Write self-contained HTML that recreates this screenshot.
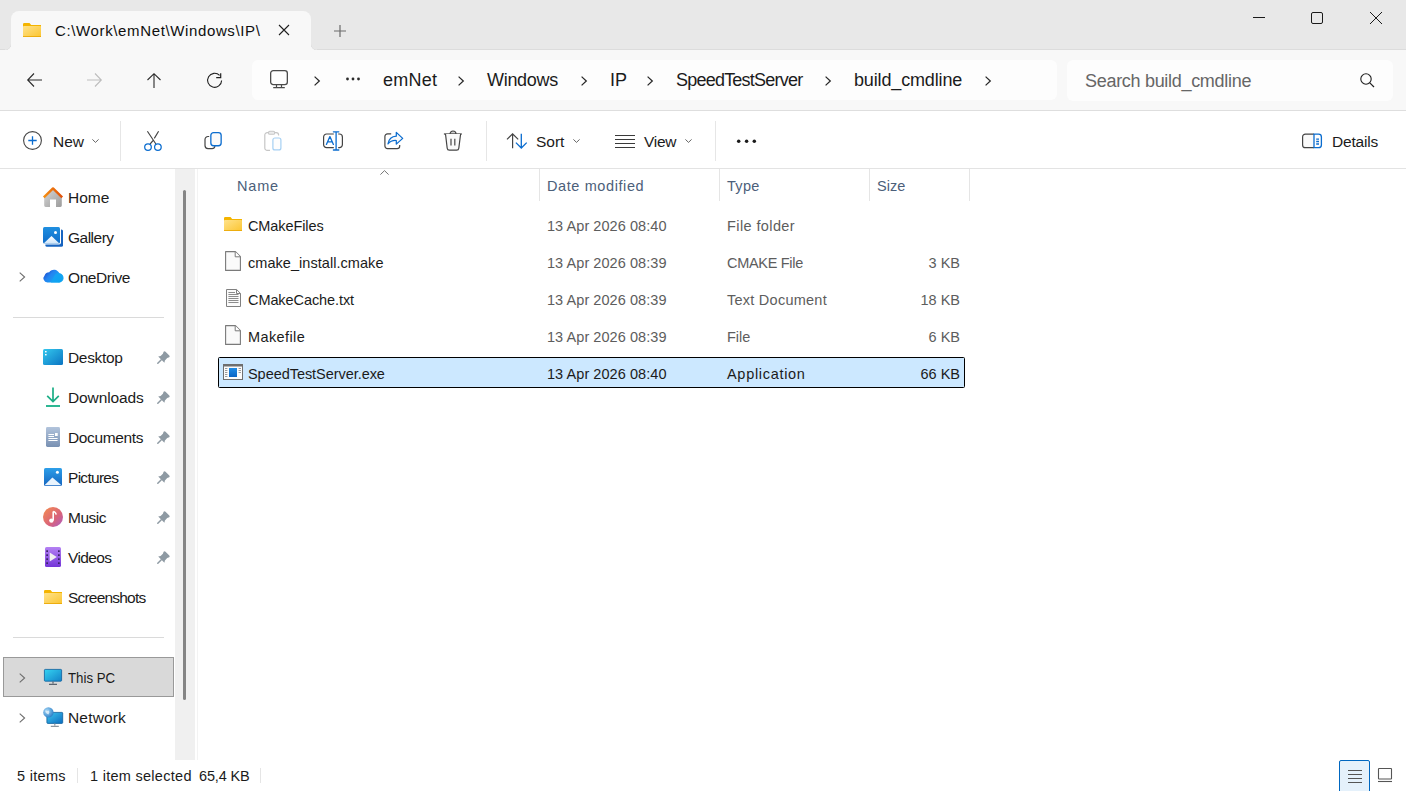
<!DOCTYPE html>
<html><head><meta charset="utf-8">
<style>
*{box-sizing:border-box;margin:0;padding:0}
html,body{width:1406px;height:791px;overflow:hidden;background:#fff}
body{position:relative;font-family:"Liberation Sans",sans-serif;color:#1b1b1b}
.a{position:absolute}
.t{position:absolute;white-space:pre;line-height:20px;font-size:15px}
svg{position:absolute;overflow:visible}
</style></head><body>

<!-- TITLE BAR -->
<div class="a" style="left:0;top:0;width:1406px;height:50px;background:#e8e8e8;border-bottom:1px solid #dcdcdc"></div>
<!-- tab -->
<div class="a" style="left:11px;top:11px;width:300px;height:40px;background:#f8f8f8;border-radius:8px 8px 0 0"></div>
<!-- inverted corners -->
<div class="a" style="left:5px;top:44px;width:6px;height:6px;background:radial-gradient(circle at 0 0,#e8e8e8 5.4px,#dedede 6px,#f8f8f8 6.6px)"></div>
<div class="a" style="left:311px;top:44px;width:6px;height:6px;background:radial-gradient(circle at 100% 0,#e8e8e8 5.4px,#dedede 6px,#f8f8f8 6.6px)"></div>
<!-- address area bg -->
<div class="a" style="left:0;top:50px;width:1406px;height:61px;background:#f8f8f8;border-bottom:1px solid #dedede"></div>

<!-- tab folder icon -->
<svg style="left:23px;top:23px" width="18" height="14" viewBox="0 0 18 14">
<defs><linearGradient id="tfg" x1="0" y1="0" x2="1" y2="1"><stop offset="0" stop-color="#ffe28a"/><stop offset="1" stop-color="#fbc531"/></linearGradient></defs>
<path d="M0 1.2Q0 0 1.2 0H6.5L8.2 2H18V14H0Z" fill="#f4b400"/>
<rect x="0" y="3" width="18" height="11" rx="0.8" fill="url(#tfg)"/>
<rect x="0" y="13.2" width="18" height="0.8" fill="#e9a500"/>
</svg>
<div class="t" style="left:55px;top:21px;font-size:15px;letter-spacing:0.63px;color:#0f0f0f">C:\Work\emNet\Windows\IP\</div>
<svg style="left:279px;top:25px" width="10" height="10" viewBox="0 0 10 10"><path d="M0 0L10 10M10 0L0 10" stroke="#1f1f1f" stroke-width="1.1"/></svg>
<svg style="left:334px;top:25px" width="12" height="12" viewBox="0 0 12 12"><path d="M6 0V12M0 6H12" stroke="#6b6b6b" stroke-width="1.2"/></svg>

<!-- window controls -->
<svg style="left:1253px;top:16px" width="12" height="3" viewBox="0 0 12 3"><path d="M0 1.5H12" stroke="#1a1a1a" stroke-width="1"/></svg>
<svg style="left:1311px;top:12px" width="12" height="12" viewBox="0 0 12 12"><rect x="0.5" y="0.5" width="11" height="11" rx="1.5" fill="none" stroke="#1a1a1a" stroke-width="1"/></svg>
<svg style="left:1370px;top:12px" width="12" height="12" viewBox="0 0 12 12"><path d="M0 0L12 12M12 0L0 12" stroke="#1a1a1a" stroke-width="1"/></svg>

<!-- NAV BUTTONS -->
<svg style="left:27px;top:73px" width="15" height="14" viewBox="0 0 15 14"><path d="M7 0.5L0.7 7L7 13.5M0.7 7H15" fill="none" stroke="#2b2b2b" stroke-width="1.1"/></svg>
<svg style="left:87px;top:73px" width="15" height="14" viewBox="0 0 15 14"><path d="M8 0.5L14.3 7L8 13.5M14.3 7H0" fill="none" stroke="#bdbdbd" stroke-width="1.1"/></svg>
<svg style="left:147px;top:73px" width="14" height="15" viewBox="0 0 14 15"><path d="M0.5 7L7 0.7L13.5 7M7 0.7V15" fill="none" stroke="#2b2b2b" stroke-width="1.1"/></svg>
<svg style="left:207px;top:73px" width="15" height="15" viewBox="0 0 15 15"><path d="M14.6 7.4A7 7 0 1 1 12.6 2.4" fill="none" stroke="#1f1f1f" stroke-width="1.1"/><path d="M13.7 0.2V4.7H9.2" fill="none" stroke="#1f1f1f" stroke-width="1.2"/></svg>

<!-- ADDRESS BOX -->
<div class="a" style="left:252px;top:60px;width:805px;height:40px;background:#fdfdfd;border-radius:6px"></div>
<svg style="left:270px;top:70px" width="18" height="19" viewBox="0 0 18 19"><rect x="0.65" y="0.65" width="16.7" height="13.9" rx="2.6" fill="none" stroke="#4a4a4a" stroke-width="1.3"/><path d="M6.5 14.5V17.4M11.5 14.5V17.4M3.2 17.6H14.8" stroke="#4a4a4a" stroke-width="1.2"/></svg>
<div id="bc"></div>
<svg style="left:314px;top:76px" width="6" height="10" viewBox="0 0 6 10"><path d="M0.6 0.6L5.3 5L0.6 9.4" fill="none" stroke="#262626" stroke-width="1.25"/></svg>
<svg style="left:346px;top:77px" width="14" height="4" viewBox="0 0 14 4"><circle cx="1.5" cy="2" r="1.4" fill="#2b2b2b"/><circle cx="7" cy="2" r="1.4" fill="#2b2b2b"/><circle cx="12.5" cy="2" r="1.4" fill="#2b2b2b"/></svg>
<div class="t" style="left:383px;top:70px;font-size:18px;letter-spacing:0.25px">emNet</div>
<svg style="left:458px;top:76px" width="6" height="10" viewBox="0 0 6 10"><path d="M0.6 0.6L5.3 5L0.6 9.4" fill="none" stroke="#262626" stroke-width="1.25"/></svg>
<div class="t" style="left:487px;top:70px;font-size:18px;letter-spacing:-0.3px">Windows</div>
<svg style="left:581px;top:76px" width="6" height="10" viewBox="0 0 6 10"><path d="M0.6 0.6L5.3 5L0.6 9.4" fill="none" stroke="#262626" stroke-width="1.25"/></svg>
<div class="t" style="left:610px;top:70px;font-size:18px">IP</div>
<svg style="left:647px;top:76px" width="6" height="10" viewBox="0 0 6 10"><path d="M0.6 0.6L5.3 5L0.6 9.4" fill="none" stroke="#262626" stroke-width="1.25"/></svg>
<div class="t" style="left:676px;top:70px;font-size:18px;letter-spacing:-0.78px">SpeedTestServer</div>
<svg style="left:825px;top:76px" width="6" height="10" viewBox="0 0 6 10"><path d="M0.6 0.6L5.3 5L0.6 9.4" fill="none" stroke="#262626" stroke-width="1.25"/></svg>
<div class="t" style="left:854px;top:70px;font-size:18px;letter-spacing:-0.15px">build_cmdline</div>
<svg style="left:985px;top:76px" width="6" height="10" viewBox="0 0 6 10"><path d="M0.6 0.6L5.3 5L0.6 9.4" fill="none" stroke="#262626" stroke-width="1.25"/></svg>

<!-- SEARCH -->
<div class="a" style="left:1067px;top:60px;width:326px;height:41px;background:#fdfdfd;border-radius:6px"></div>
<div class="t" style="left:1085px;top:71px;font-size:18px;letter-spacing:-0.3px;color:#666">Search build_cmdline</div>
<svg style="left:1360px;top:73px" width="15" height="15" viewBox="0 0 15 15"><circle cx="6" cy="6" r="5.2" fill="none" stroke="#1f1f1f" stroke-width="1.1"/><path d="M9.8 9.8L14 14" stroke="#1f1f1f" stroke-width="1.2"/></svg>


<!-- TOOLBAR -->
<div class="a" style="left:0;top:168px;width:1406px;height:1px;background:#e3e3e3"></div>
<svg style="left:23px;top:131px" width="19" height="19" viewBox="0 0 19 19"><circle cx="9.5" cy="9.5" r="8.9" fill="none" stroke="#444" stroke-width="1.1"/><path d="M9.5 5.3V13.7M5.3 9.5H13.7" stroke="#0a6ccf" stroke-width="1.3"/></svg>
<div class="t" style="left:53px;top:132px;font-size:15.5px">New</div>
<svg style="left:92px;top:139px" width="7" height="4" viewBox="0 0 7 4"><path d="M0.4 0.4L3.5 3.4L6.6 0.4" fill="none" stroke="#555" stroke-width="0.9"/></svg>
<div class="a" style="left:120px;top:121px;width:1px;height:40px;background:#e6e6e6"></div>

<!-- cut -->
<svg style="left:144px;top:131px" width="19" height="21" viewBox="0 0 19 21"><path d="M3.4 0.3L11.9 13M14.6 0.3L10.3 7.4M9.2 9.4L6.1 13" stroke="#444" stroke-width="1.15"/><circle cx="4" cy="16.1" r="3.3" fill="none" stroke="#0a6ccf" stroke-width="1.25"/><circle cx="13.9" cy="16.1" r="3.3" fill="none" stroke="#0a6ccf" stroke-width="1.25"/></svg>
<!-- copy -->
<svg style="left:204px;top:131px" width="19" height="20" viewBox="0 0 19 20"><path d="M5.2 5.5H4A3 3 0 0 0 1 8.5V14.6A3 3 0 0 0 4 17.6H8A3 3 0 0 0 11 15.2" fill="none" stroke="#444" stroke-width="1.2"/><rect x="6.85" y="1.65" width="10.3" height="13.1" rx="2.7" fill="#fafafa" stroke="#0a6ccf" stroke-width="1.3"/></svg>
<!-- paste -->
<svg style="left:264px;top:130px" width="19" height="22" viewBox="0 0 19 22"><path d="M4.4 2.6H3.2A2.4 2.4 0 0 0 0.8 5V18A2.4 2.4 0 0 0 3.2 20.4H6M10.6 2.6H12.2A2.4 2.4 0 0 1 14.6 5V5.6" fill="none" stroke="#c6c6c6" stroke-width="1.2"/><rect x="4.5" y="1.3" width="6.2" height="3" rx="1.4" fill="#ececec" stroke="#c6c6c6" stroke-width="1.1"/><rect x="8.9" y="8" width="8" height="11.9" rx="2" fill="#fdfdfd" stroke="#a6d0f3" stroke-width="1.2"/></svg>
<!-- rename -->
<svg style="left:323px;top:131px" width="21" height="21" viewBox="0 0 21 21"><path d="M10.8 3H3.6A3 3 0 0 0 0.6 6V13.6A3 3 0 0 0 3.6 16.6H10.8M15.2 3H16.4A3 3 0 0 1 19.4 6V13.6A3 3 0 0 1 16.4 16.6H15.2" fill="none" stroke="#444" stroke-width="1.2"/><path d="M3.4 13.4L6.9 5.6L10.4 13.4M4.6 10.9H9.2" fill="none" stroke="#0a6ccf" stroke-width="1.3" stroke-linecap="round" stroke-linejoin="round"/><path d="M13.1 0.8V19M10.4 0.8H15.8M10.4 19H15.8" fill="none" stroke="#0a6ccf" stroke-width="1.3" stroke-linecap="round"/></svg>
<!-- share -->
<svg style="left:384px;top:131px" width="20" height="20" viewBox="0 0 20 20"><path d="M7.2 2.9H3.5A2.6 2.6 0 0 0 0.9 5.5V15.1A2.6 2.6 0 0 0 3.5 17.7H13.1A2.6 2.6 0 0 0 15.7 15.1V14.1" fill="none" stroke="#444" stroke-width="1.2"/><path d="M12.3 1.4L18.7 7.35L12.3 13.1V9.5C8.5 9.2 6 10.5 4 12.9C4.8 8 7.5 5.4 12.3 5.2Z" fill="#fafafa" stroke="#0a6ccf" stroke-width="1.25" stroke-linejoin="round"/></svg>
<!-- delete -->
<svg style="left:443px;top:130px" width="20" height="22" viewBox="0 0 20 22"><path d="M7 4A3 3 0 0 1 13 4" fill="#d0d0d0" stroke="#444" stroke-width="1.2"/><path d="M0.9 4H18.8" stroke="#444" stroke-width="1.3"/><path d="M2.5 4L4.2 18.2Q4.4 20.2 6.4 20.2H13.6Q15.6 20.2 15.8 18.2L17.6 4" fill="#fafafa" stroke="#444" stroke-width="1.2"/><path d="M8 8.8V15.6M11.8 8.8V15.6" stroke="#555" stroke-width="1.3"/></svg>
<div class="a" style="left:486px;top:121px;width:1px;height:40px;background:#e6e6e6"></div>

<!-- sort -->
<svg style="left:506px;top:133px" width="22" height="17" viewBox="0 0 22 17"><path d="M6.6 15.2V1M1 6.4L6.6 0.8L12.2 6.4" fill="none" stroke="#444" stroke-width="1.2"/><path d="M15.3 0.8V15M9.9 9.6L15.3 15L20.7 9.6" fill="none" stroke="#0a6ccf" stroke-width="1.3"/></svg>
<div class="t" style="left:536px;top:132px;font-size:15.5px">Sort</div>
<svg style="left:573px;top:139px" width="7" height="4" viewBox="0 0 7 4"><path d="M0.4 0.4L3.5 3.4L6.6 0.4" fill="none" stroke="#555" stroke-width="0.9"/></svg>
<!-- view -->
<svg style="left:615px;top:134px" width="20" height="15" viewBox="0 0 20 15"><path d="M0 1.5H20M0 5.5H20M0 9.5H20M0 13.5H20" stroke="#3a3a3a" stroke-width="1.1"/></svg>
<div class="t" style="left:644px;top:132px;font-size:15.5px;letter-spacing:-0.3px">View</div>
<svg style="left:685px;top:139px" width="7" height="4" viewBox="0 0 7 4"><path d="M0.4 0.4L3.5 3.4L6.6 0.4" fill="none" stroke="#555" stroke-width="0.9"/></svg>
<div class="a" style="left:715px;top:121px;width:1px;height:40px;background:#e6e6e6"></div>
<svg style="left:737px;top:139px" width="20" height="5" viewBox="0 0 20 5"><circle cx="1.7" cy="2.3" r="1.75" fill="#1a1a1a"/><circle cx="9.6" cy="2.3" r="1.75" fill="#1a1a1a"/><circle cx="17.3" cy="2.3" r="1.75" fill="#1a1a1a"/></svg>
<!-- details -->
<svg style="left:1302px;top:133px" width="20" height="16" viewBox="0 0 20 16"><path d="M12 1.1H3.4A2.8 2.8 0 0 0 0.6 3.9V11.9A2.8 2.8 0 0 0 3.4 14.7H12" fill="#fafafa" stroke="#444" stroke-width="1.2"/><path d="M12 1.1H16.6A2.8 2.8 0 0 1 19.4 3.9V11.9A2.8 2.8 0 0 1 16.6 14.7H12Z" fill="#fdfdfd" stroke="#0a6ccf" stroke-width="1.3"/><path d="M14.2 6.1H17M14.2 8.5H17M14.2 11H17" stroke="#0a6ccf" stroke-width="1.3"/></svg>
<div class="t" style="left:1332px;top:132px;font-size:15.5px;letter-spacing:-0.17px">Details</div>

<!-- NAV PANE -->
<div class="a" style="left:175px;top:169px;width:20px;height:591px;background:#f0f0f0"></div>
<div class="a" style="left:183px;top:190px;width:3px;height:510px;background:#858585;border-radius:1.5px"></div>
<div class="a" style="left:197px;top:169px;width:1px;height:591px;background:#f3f3f3"></div>
<div class="a" style="left:13px;top:317px;width:151px;height:1px;background:#dadada"></div>
<div class="a" style="left:13px;top:637px;width:151px;height:1px;background:#dadada"></div>
<div class="a" style="left:3px;top:657px;width:171px;height:40px;background:#d9d9d9;border:1px solid #999"></div>

<!-- home icon -->
<svg style="left:43px;top:187px" width="20" height="20" viewBox="0 0 20 20">
<defs><linearGradient id="hg" x1="0" y1="0" x2="1" y2="1"><stop offset="0" stop-color="#d6d6d6"/><stop offset="1" stop-color="#9c9c9c"/></linearGradient>
<linearGradient id="rg" x1="0" y1="0" x2="1" y2="0"><stop offset="0" stop-color="#f58f12"/><stop offset="1" stop-color="#e0500a"/></linearGradient></defs>
<path d="M1.2 9.6L10 2.4L18.8 9.6V18.6A1.4 1.4 0 0 1 17.4 20H13V12.6H7V20H2.6A1.4 1.4 0 0 1 1.2 18.6Z" fill="url(#hg)"/>
<path d="M0.8 10.4L10 1.4L19.2 10.4" fill="none" stroke="url(#rg)" stroke-width="2.4" stroke-linejoin="round"/>
</svg>
<div class="t" style="left:68px;top:188px;font-size:15.5px;letter-spacing:0px">Home</div>
<!-- gallery -->
<svg style="left:43px;top:227px" width="21" height="21" viewBox="0 0 21 21">
<defs><linearGradient id="gg" x1="0" y1="0" x2="0" y2="1"><stop offset="0" stop-color="#1f8fe0"/><stop offset="1" stop-color="#0f6cc8"/></linearGradient>
<linearGradient id="gm" x1="0" y1="0" x2="0" y2="1"><stop offset="0" stop-color="#ffffff"/><stop offset="1" stop-color="#cfe6fa"/></linearGradient></defs>
<rect x="2.4" y="2.4" width="17.6" height="17.4" rx="1.6" fill="#1764c0"/>
<rect x="-0.8" y="-0.8" width="18.8" height="18.2" rx="2" fill="#fff"/>
<rect x="0" y="0" width="17" height="16.5" rx="1.5" fill="url(#gg)"/>
<path d="M0.6 16.4L8.5 9L16.4 16.4Z" fill="url(#gm)"/>
<circle cx="12.5" cy="5.4" r="1.5" fill="#fff"/>
</svg>
<div class="t" style="left:68px;top:228px;font-size:15.5px;letter-spacing:-0.5px">Gallery</div>
<!-- onedrive -->
<svg style="left:19px;top:272px" width="7" height="10" viewBox="0 0 7 10"><path d="M0.7 0.6L5.6 5L0.7 9.4" fill="none" stroke="#6e6e6e" stroke-width="1.1"/></svg>
<svg style="left:43px;top:269px" width="20" height="14" viewBox="0 0 20 14">
<defs><linearGradient id="og" x1="0" y1="0.2" x2="1" y2="0.8"><stop offset="0" stop-color="#1c48cc"/><stop offset="0.35" stop-color="#2384f0"/><stop offset="1" stop-color="#10b4f4"/></linearGradient>
<linearGradient id="og2" x1="0" y1="0" x2="1" y2="1"><stop offset="0" stop-color="#18a6f6"/><stop offset="1" stop-color="#0aa0ee"/></linearGradient></defs>
<path d="M4.4 13.6A4.3 4.3 0 0 1 1.6 6.4A5 5 0 0 1 6.2 3.2A6 6 0 0 1 16.4 4.2A4.8 4.8 0 0 1 15.4 13.6Z" fill="url(#og)"/>
<path d="M7.8 13.6L11.6 6.6A4.4 4.4 0 0 1 16.4 4.2A4.7 4.7 0 0 1 15.4 13.6Z" fill="url(#og2)" opacity="0.9"/>
</svg>
<div class="t" style="left:68px;top:268px;font-size:15.5px;letter-spacing:-0.43px">OneDrive</div>

<!-- desktop -->
<svg style="left:43px;top:349px" width="20" height="16" viewBox="0 0 20 16">
<defs><linearGradient id="dg" x1="0" y1="0" x2="1" y2="1"><stop offset="0" stop-color="#34c8ee"/><stop offset="1" stop-color="#0b74c2"/></linearGradient></defs>
<rect x="0" y="0" width="20" height="16" rx="1.5" fill="url(#dg)"/>
<rect x="2" y="2" width="1.6" height="1.4" fill="#fff"/><rect x="2" y="5" width="1.6" height="1.4" fill="#fff"/>
</svg>
<div class="t" style="left:68px;top:348px;font-size:15.5px;letter-spacing:-0.33px">Desktop</div>
<svg style="left:157px;top:351px" width="13" height="13" viewBox="0 0 13 13"><path d="M6.6 0.8Q7.5 -0.2 8.5 0.7L12.3 4.5Q13.2 5.5 12.2 6.3L10.2 7.1L7.9 9.4L7.4 11.8L1.2 5.6L3.6 5.1L5.9 2.8Z" fill="#8e9aa3"/><path d="M4.3 8.7L0.8 12.2" stroke="#8e9aa3" stroke-width="1.5" stroke-linecap="round"/></svg>
<!-- downloads -->
<svg style="left:46px;top:387px" width="14" height="20" viewBox="0 0 14 20"><path d="M7 0.5V14.5M1.2 8.8L7 14.6L12.8 8.8" fill="none" stroke="#1cae86" stroke-width="1.7"/><path d="M0 19H14" stroke="#22b48e" stroke-width="1.9"/></svg>
<div class="t" style="left:68px;top:388px;font-size:15.5px;letter-spacing:-0.12px">Downloads</div>
<svg style="left:157px;top:391px" width="13" height="13" viewBox="0 0 13 13"><path d="M6.6 0.8Q7.5 -0.2 8.5 0.7L12.3 4.5Q13.2 5.5 12.2 6.3L10.2 7.1L7.9 9.4L7.4 11.8L1.2 5.6L3.6 5.1L5.9 2.8Z" fill="#8e9aa3"/><path d="M4.3 8.7L0.8 12.2" stroke="#8e9aa3" stroke-width="1.5" stroke-linecap="round"/></svg>
<!-- documents -->
<svg style="left:46px;top:427px" width="14" height="20" viewBox="0 0 14 20">
<defs><linearGradient id="docg" x1="0" y1="0" x2="0" y2="1"><stop offset="0" stop-color="#b2c4dc"/><stop offset="1" stop-color="#7890b2"/></linearGradient></defs>
<rect x="0" y="0" width="14" height="20" rx="1.4" fill="url(#docg)"/>
<path d="M2.4 7.5H8M2.4 9.5H8M2.4 11.5H11.6M2.4 13.5H11.6" stroke="#fff" stroke-width="1"/><rect x="9" y="6" width="2.7" height="3" fill="#fff"/>
</svg>
<div class="t" style="left:68px;top:428px;font-size:15.5px;letter-spacing:-0.37px">Documents</div>
<svg style="left:157px;top:431px" width="13" height="13" viewBox="0 0 13 13"><path d="M6.6 0.8Q7.5 -0.2 8.5 0.7L12.3 4.5Q13.2 5.5 12.2 6.3L10.2 7.1L7.9 9.4L7.4 11.8L1.2 5.6L3.6 5.1L5.9 2.8Z" fill="#8e9aa3"/><path d="M4.3 8.7L0.8 12.2" stroke="#8e9aa3" stroke-width="1.5" stroke-linecap="round"/></svg>
<!-- pictures -->
<svg style="left:44px;top:468px" width="18" height="18" viewBox="0 0 18 18">
<defs><linearGradient id="pg" x1="0" y1="0" x2="0" y2="1"><stop offset="0" stop-color="#2d9fe9"/><stop offset="1" stop-color="#1565c0"/></linearGradient></defs>
<rect x="0" y="0" width="18" height="18" rx="1.6" fill="url(#pg)"/>
<path d="M0.5 17.2L8.4 9.6L17.5 17.2Z" fill="#eaf4fd"/>
<circle cx="13.4" cy="4.2" r="1.5" fill="#fff"/>
</svg>
<div class="t" style="left:68px;top:468px;font-size:15.5px;letter-spacing:-0.71px">Pictures</div>
<svg style="left:157px;top:471px" width="13" height="13" viewBox="0 0 13 13"><path d="M6.6 0.8Q7.5 -0.2 8.5 0.7L12.3 4.5Q13.2 5.5 12.2 6.3L10.2 7.1L7.9 9.4L7.4 11.8L1.2 5.6L3.6 5.1L5.9 2.8Z" fill="#8e9aa3"/><path d="M4.3 8.7L0.8 12.2" stroke="#8e9aa3" stroke-width="1.5" stroke-linecap="round"/></svg>
<!-- music -->
<svg style="left:43px;top:507px" width="20" height="20" viewBox="0 0 20 20">
<defs><linearGradient id="mg" x1="0" y1="0" x2="1" y2="1"><stop offset="0" stop-color="#f58e4f"/><stop offset="0.6" stop-color="#d9637a"/><stop offset="1" stop-color="#a85cc9"/></linearGradient></defs>
<circle cx="10" cy="10" r="10" fill="url(#mg)"/>
<path d="M10.2 4.4V13.4" stroke="#fff" stroke-width="1.6"/><path d="M10.2 4.4Q13 5.2 13.2 7.6" fill="none" stroke="#fff" stroke-width="1.4"/><circle cx="8.4" cy="13.6" r="2.2" fill="#fff"/>
</svg>
<div class="t" style="left:68px;top:508px;font-size:15.5px;letter-spacing:-0.5px">Music</div>
<svg style="left:157px;top:511px" width="13" height="13" viewBox="0 0 13 13"><path d="M6.6 0.8Q7.5 -0.2 8.5 0.7L12.3 4.5Q13.2 5.5 12.2 6.3L10.2 7.1L7.9 9.4L7.4 11.8L1.2 5.6L3.6 5.1L5.9 2.8Z" fill="#8e9aa3"/><path d="M4.3 8.7L0.8 12.2" stroke="#8e9aa3" stroke-width="1.5" stroke-linecap="round"/></svg>
<!-- videos -->
<svg style="left:45px;top:547px" width="16" height="20" viewBox="0 0 16 20">
<defs><linearGradient id="vg" x1="0" y1="0" x2="0" y2="1"><stop offset="0" stop-color="#b481f3"/><stop offset="1" stop-color="#7436d8"/></linearGradient></defs>
<rect x="0" y="0" width="16" height="20" rx="1.6" fill="url(#vg)"/>
<path d="M4.7 5.6L11.8 10L4.7 14.4Z" fill="#f0f0f0"/>
<g fill="#3a2466"><rect x="1.3" y="3.3" width="1.7" height="1.7"/><rect x="1.3" y="7.3" width="1.7" height="1.7"/><rect x="1.3" y="11.3" width="1.7" height="1.7"/><rect x="1.3" y="15.3" width="1.7" height="1.7"/><rect x="13" y="3.3" width="1.7" height="1.7"/><rect x="13" y="7.3" width="1.7" height="1.7"/><rect x="13" y="11.3" width="1.7" height="1.7"/><rect x="13" y="15.3" width="1.7" height="1.7"/></g>
</svg>
<div class="t" style="left:68px;top:548px;font-size:15.5px;letter-spacing:-0.6px">Videos</div>
<svg style="left:157px;top:551px" width="13" height="13" viewBox="0 0 13 13"><path d="M6.6 0.8Q7.5 -0.2 8.5 0.7L12.3 4.5Q13.2 5.5 12.2 6.3L10.2 7.1L7.9 9.4L7.4 11.8L1.2 5.6L3.6 5.1L5.9 2.8Z" fill="#8e9aa3"/><path d="M4.3 8.7L0.8 12.2" stroke="#8e9aa3" stroke-width="1.5" stroke-linecap="round"/></svg>
<!-- screenshots folder -->
<svg style="left:44px;top:590px" width="18" height="14" viewBox="0 0 18 14">
<defs><linearGradient id="fg" x1="0" y1="0" x2="1" y2="1"><stop offset="0" stop-color="#ffe28a"/><stop offset="1" stop-color="#fbc531"/></linearGradient></defs>
<path d="M0 1.2Q0 0 1.2 0H6.5L8.2 2H18V14H0Z" fill="#f4b400"/>
<rect x="0" y="3" width="18" height="11" rx="0.8" fill="url(#fg)"/>
<rect x="0" y="13.2" width="18" height="0.8" fill="#e9a500"/>
</svg>
<div class="t" style="left:68px;top:588px;font-size:15.5px;letter-spacing:-0.8px">Screenshots</div>

<!-- this pc -->
<svg style="left:19px;top:673px" width="7" height="10" viewBox="0 0 7 10"><path d="M0.7 0.6L5.6 5L0.7 9.4" fill="none" stroke="#6e6e6e" stroke-width="1.1"/></svg>
<svg style="left:44px;top:669px" width="18" height="16" viewBox="0 0 18 16">
<defs><linearGradient id="tg" x1="0" y1="0" x2="1" y2="1"><stop offset="0" stop-color="#35d4f2"/><stop offset="1" stop-color="#1282c8"/></linearGradient></defs>
<rect x="0.4" y="0.4" width="17.2" height="11.8" rx="0.8" fill="url(#tg)" stroke="#0c5d9c" stroke-width="0.8"/>
<path d="M9 12.4V14.6M5 15.3H13" stroke="#5a6470" stroke-width="1.2"/>
</svg>
<div class="t" style="left:68px;top:668px;font-size:15.5px;transform:scaleX(0.855);transform-origin:0 0">This PC</div>
<!-- network -->
<svg style="left:19px;top:713px" width="7" height="10" viewBox="0 0 7 10"><path d="M0.7 0.6L5.6 5L0.7 9.4" fill="none" stroke="#6e6e6e" stroke-width="1.1"/></svg>
<svg style="left:43px;top:707px" width="21" height="20" viewBox="0 0 21 20">
<defs><linearGradient id="ng" x1="0" y1="0" x2="1" y2="1"><stop offset="0" stop-color="#3fc7ee"/><stop offset="1" stop-color="#0b6cc0"/></linearGradient>
<radialGradient id="gl" cx="0.35" cy="0.35" r="0.7"><stop offset="0" stop-color="#a9d8f6"/><stop offset="1" stop-color="#2a7fc8"/></radialGradient></defs>
<rect x="3.9" y="5.4" width="15.8" height="11" rx="0.8" fill="url(#ng)" stroke="#0c5d9c" stroke-width="0.8"/>
<path d="M11.8 16.4V18.6M7.8 19.3H15.8" stroke="#8a949e" stroke-width="1.2"/>
<circle cx="5.4" cy="5.4" r="5.2" fill="url(#gl)"/>
<path d="M2.4 3.2Q4.4 4.4 6 3.6Q7 5.6 5.4 7.4Q3.4 7 2.4 5" fill="#e8f4fb" opacity="0.8"/>
</svg>
<div class="t" style="left:68px;top:708px;font-size:15.5px;letter-spacing:0.17px">Network</div>

<!-- LIST -->
<div class="t" style="left:237px;top:176px;font-size:14.5px;letter-spacing:0.8px;color:#4c607a">Name</div>
<svg style="left:380px;top:170px" width="9" height="5" viewBox="0 0 9 5"><path d="M0.4 4.6L4.5 0.6L8.6 4.6" fill="none" stroke="#666" stroke-width="0.9"/></svg>
<div class="a" style="left:539px;top:169px;width:1px;height:32px;background:#e5e5e5"></div>
<div class="t" style="left:547px;top:176px;font-size:14.5px;letter-spacing:0.6px;color:#4c607a">Date modified</div>
<div class="a" style="left:719px;top:169px;width:1px;height:32px;background:#e5e5e5"></div>
<div class="t" style="left:727px;top:176px;font-size:14.5px;letter-spacing:0.3px;color:#4c607a">Type</div>
<div class="a" style="left:869px;top:169px;width:1px;height:32px;background:#e5e5e5"></div>
<div class="t" style="left:877px;top:176px;font-size:14.5px;color:#4c607a">Size</div>
<div class="a" style="left:969px;top:169px;width:1px;height:32px;background:#e5e5e5"></div>

<!-- row selection -->
<div class="a" style="left:218px;top:357px;width:747px;height:31px;background:#cce8ff;border:1px solid #000;border-radius:1.5px"></div>

<!-- folder -->
<svg style="left:224px;top:217px" width="18" height="14" viewBox="0 0 18 14">
<defs><linearGradient id="fg2" x1="0" y1="0" x2="1" y2="1"><stop offset="0" stop-color="#ffe28a"/><stop offset="1" stop-color="#fbc531"/></linearGradient></defs>
<path d="M0 1.2Q0 0 1.2 0H6.5L8.2 2H18V14H0Z" fill="#f4b400"/>
<rect x="0" y="3" width="18" height="11" rx="0.8" fill="url(#fg2)"/>
<rect x="0" y="13.2" width="18" height="0.8" fill="#e9a500"/>
</svg>
<svg style="left:225px;top:251px" width="16" height="20" viewBox="0 0 16 20"><path d="M0.6 0.6H10.4L15.4 5.6V19.4H0.6Z" fill="#fafafa" stroke="#7a7a7a" stroke-width="1.1" stroke-linejoin="round"/><path d="M10.2 0.8V5.8H15.2" fill="#fff" stroke="#7a7a7a" stroke-width="1"/></svg><svg style="left:225px;top:325px" width="16" height="20" viewBox="0 0 16 20"><path d="M0.6 0.6H10.4L15.4 5.6V19.4H0.6Z" fill="#fafafa" stroke="#7a7a7a" stroke-width="1.1" stroke-linejoin="round"/><path d="M10.2 0.8V5.8H15.2" fill="#fff" stroke="#7a7a7a" stroke-width="1"/></svg>
<svg style="left:226px;top:289px" width="15" height="18" viewBox="0 0 15 18"><path d="M0.5 0.5H10.6L14.5 4.4V17.5H0.5Z" fill="#fafafa" stroke="#808080" stroke-width="1" stroke-linejoin="round"/><path d="M10.5 0.6V4.5H14.4" fill="none" stroke="#808080" stroke-width="1"/><path d="M2.4 3.5H9M2.4 5.5H12.5M2.4 7.5H12.5M2.4 9.5H12.5M2.4 11.5H12.5M2.4 13.5H12.5" stroke="#8c8c8c" stroke-width="1"/></svg>
<svg style="left:223px;top:364px" width="20" height="16" viewBox="0 0 20 16">
<defs><linearGradient id="exg" x1="0" y1="0" x2="0" y2="1"><stop offset="0" stop-color="#1e8ce6"/><stop offset="1" stop-color="#0a64c4"/></linearGradient></defs>
<rect x="0.5" y="0.5" width="19" height="15" fill="#fbfbfb" stroke="#6f6f6f" stroke-width="1"/>
<rect x="0.5" y="0.5" width="19" height="2" fill="#6f6f6f"/>
<rect x="6" y="4" width="8" height="9" fill="url(#exg)"/>
<path d="M2 4.5H4.4M2 6.5H4.4M2 8.5H4.4M2 10.5H4.4M2 12.5H4.4M15.6 4.5H18M15.6 6.5H18M15.6 8.5H18" stroke="#9a9a9a" stroke-width="1"/>
</svg>

<div class="t" style="left:248px;top:216px;font-size:14.5px;letter-spacing:-0.1px">CMakeFiles</div>
<div class="t" style="left:248px;top:253px;font-size:14.5px;letter-spacing:0.05px">cmake_install.cmake</div>
<div class="t" style="left:248px;top:290px;font-size:14.5px;letter-spacing:-0.08px">CMakeCache.txt</div>
<div class="t" style="left:248px;top:327px;font-size:14.5px;letter-spacing:0.4px">Makefile</div>
<div class="t" style="left:248px;top:364px;font-size:14.5px;letter-spacing:-0.05px">SpeedTestServer.exe</div>

<div class="t" style="left:547px;top:216px;font-size:14.5px;letter-spacing:0.06px;color:#5d5d5d">13 Apr 2026 08:40</div>
<div class="t" style="left:547px;top:253px;font-size:14.5px;letter-spacing:0.06px;color:#5d5d5d">13 Apr 2026 08:39</div>
<div class="t" style="left:547px;top:290px;font-size:14.5px;letter-spacing:0.06px;color:#5d5d5d">13 Apr 2026 08:39</div>
<div class="t" style="left:547px;top:327px;font-size:14.5px;letter-spacing:0.06px;color:#5d5d5d">13 Apr 2026 08:39</div>
<div class="t" style="left:547px;top:364px;font-size:14.5px;letter-spacing:0.06px;color:#1b1b1b">13 Apr 2026 08:40</div>

<div class="t" style="left:727px;top:216px;font-size:14.5px;letter-spacing:0.4px;color:#5d5d5d">File folder</div>
<div class="t" style="left:727px;top:253px;font-size:14.5px;letter-spacing:-0.3px;color:#5d5d5d">CMAKE File</div>
<div class="t" style="left:727px;top:290px;font-size:14.5px;letter-spacing:0.25px;color:#5d5d5d">Text Document</div>
<div class="t" style="left:727px;top:327px;font-size:14.5px;color:#5d5d5d">File</div>
<div class="t" style="left:727px;top:364px;font-size:14.5px;letter-spacing:0.7px;color:#1b1b1b">Application</div>

<div class="t" style="left:860px;width:100px;text-align:right;top:253px;font-size:14.5px;color:#5d5d5d">3 KB</div>
<div class="t" style="left:860px;width:100px;text-align:right;top:290px;font-size:14.5px;color:#5d5d5d">18 KB</div>
<div class="t" style="left:860px;width:100px;text-align:right;top:327px;font-size:14.5px;color:#5d5d5d">6 KB</div>
<div class="t" style="left:860px;width:100px;text-align:right;top:364px;font-size:14.5px;color:#1b1b1b">66 KB</div>

<!-- STATUS BAR -->
<div class="t" style="left:17px;top:766px;font-size:14.5px;letter-spacing:0.3px">5 items</div>
<div class="a" style="left:77px;top:768px;width:1px;height:15px;background:#e5e5e5"></div>
<div class="t" style="left:90px;top:766px;font-size:14.5px;letter-spacing:0.28px">1 item selected</div>
<div class="t" style="left:199px;top:766px;font-size:14.5px;letter-spacing:-0.15px">65,4 KB</div>
<div class="a" style="left:260px;top:768px;width:1px;height:15px;background:#e5e5e5"></div>
<div class="a" style="left:1339px;top:760px;width:31px;height:34px;background:#e5f1fb;border:1.5px solid #0067c0;border-radius:2px"></div>
<svg style="left:1348px;top:769px" width="14" height="15" viewBox="0 0 14 15"><path d="M0 1.5H14M0 5.5H14M0 9.5H14M0 13.5H14" stroke="#555" stroke-width="1.1"/></svg>
<svg style="left:1378px;top:768px" width="15" height="15" viewBox="0 0 15 15"><rect x="0.5" y="0.5" width="13" height="10.5" rx="0.6" fill="none" stroke="#555" stroke-width="1.1"/><path d="M0 13.5H14" stroke="#555" stroke-width="1.1"/></svg>
</body></html>
